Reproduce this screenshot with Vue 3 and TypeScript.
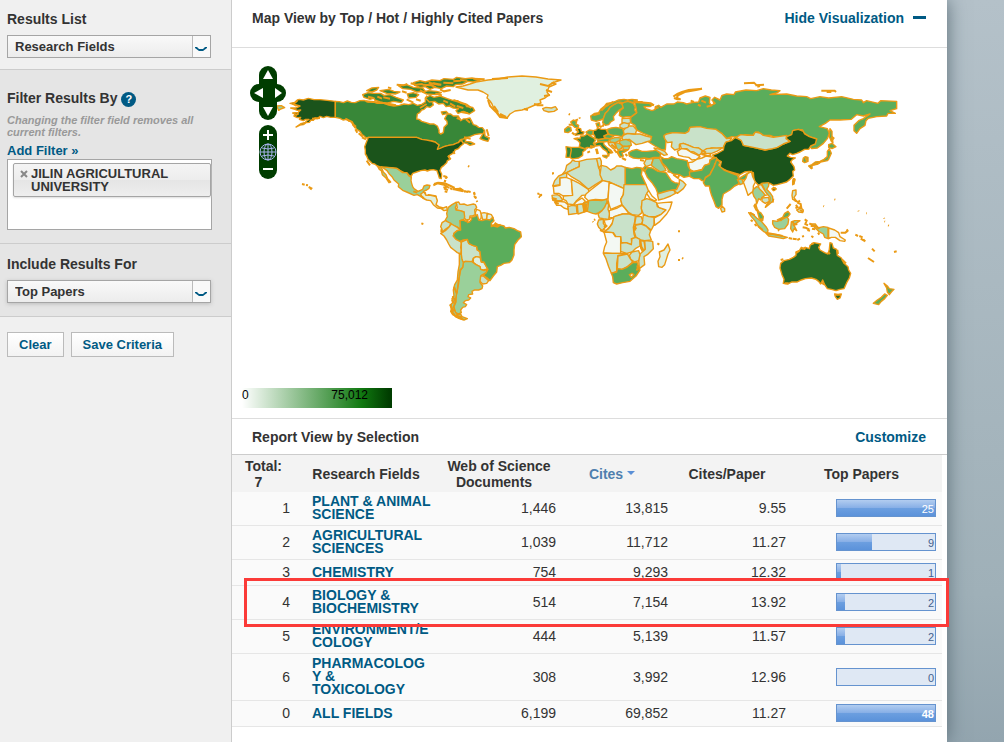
<script setup lang="ts">
import { ref } from 'vue'

type Shape = [fill: string, points: string]
interface Region { id: string; transform: string; shapes: Shape[]; islands: string }

const DARKEST = '#1b541b'
const DARK = '#276927'
const DEEP = '#388738'
const MID = '#5bad5b'
const SOFT = '#9ad09a'
const PALE = '#c9e2c9'
const FAINT = '#e0f0e0'
const NONE = '#f3f8f3'

const regions: Region[] = [
  {
    id: 'north-america',
    transform: 'translate(240 50) scale(0.33333)',
    shapes: [
      [DARKEST, '150,160 165,157 172,150 178,148 190,150 205,145 222,149 240,149 262,151 286,154 286,202 272,202 260,199 250,203 240,199 232,206 225,204 220,211 213,210 208,217 198,218 190,224 180,225 168,231 183,221 196,217 201,212 207,208 197,208 190,212 178,208 182,202 172,203 162,198 166,192 158,189 175,187 182,180 172,181 165,178 152,174 168,174 180,168 166,164'],
      [DEEP, '286,154 298,155 310,158 322,153 334,157 345,158 360,152 372,151 385,156 400,155 412,160 430,159 446,165 462,168 478,166 492,162 506,164 520,160 532,166 545,163 556,156 556,146 560,138 566,148 575,150 580,165 570,172 560,170 552,178 545,180 539,188 532,192 530,207 537,208 545,214 558,218 570,222 582,222 592,228 597,240 597,248 602,252 610,248 612,232 622,222 621,214 614,206 622,192 632,192 640,198 655,198 662,212 670,207 680,206 690,204 694,212 700,224 708,226 716,232 727,233 734,242 730,250 715,252 704,254 690,260 680,262 670,268 660,270 655,278 640,284 626,286 612,290 596,300 590,290 597,285 585,276 574,273 560,272 545,268 530,262 385,262 378,264 372,258 366,254 360,244 350,238 345,230 339,226 335,215 326,213 320,208 309,210 300,205 286,202'],
      [DARKEST, '385,262 530,262 545,268 560,270 574,273 585,276 597,285 592,298 600,295 612,290 626,286 640,284 648,280 655,278 661,272 668,274 670,282 662,288 655,296 645,300 642,308 632,314 625,318 630,328 622,332 620,338 612,346 604,352 600,362 605,372 604,386 598,384 595,374 591,362 580,359 570,360 562,363 555,360 542,362 530,366 518,370 513,380 506,374 500,368 494,369 488,366 480,362 470,355 455,353 440,352 426,352 412,348 404,342 396,340 384,328 380,318 376,312 376,300 374,290 378,280'],
      [SOFT, '424,351 440,352 470,355 480,362 488,368 500,368 507,378 514,382 513,392 515,400 518,410 522,416 534,424 541,421 548,418 552,408 561,405 570,406 567,415 560,420 550,424 553,430 546,432 543,440 532,434 522,436 500,426 488,421 475,410 476,402 462,390 456,380 448,372 441,362 430,354'],
      [SOFT, '412,348 418,358 424,362 427,374 438,384 447,398 452,396 443,386 438,374 430,366 426,356'],
      [FAINT, '543,440 556,428 558,440 566,434 588,438 590,450 576,446 560,448'],
      [DEEP, '368,134 384,128 400,130 422,130 432,136 450,134 468,142 490,150 484,158 460,154 440,160 420,156 404,150 402,144 390,148 372,142'],
      [DEEP, '380,122 396,114 416,112 410,120 396,126'],
      [DEEP, '556,144 570,136 582,142 600,138 622,146 640,152 652,152 664,160 676,162 680,170 698,172 704,182 688,192 670,184 654,190 648,182 656,176 640,174 628,168 618,170 610,160 596,162 584,154 568,156'],
      [DEEP, '520,98 540,92 556,96 576,90 600,92 612,86 640,88 650,82 676,86 696,84 720,90 700,96 684,94 668,102 646,104 640,110 620,108 604,116 584,112 570,118 556,110 540,112 524,106'],
      [DEEP, '476,108 500,104 520,112 548,114 556,124 530,126 512,118 488,116'],
      [DEEP, '420,122 446,118 462,124 480,126 466,132 440,130'],
      [DEEP, '502,132 520,128 536,134 528,142 506,144'],
      [DEEP, '548,126 566,122 590,124 604,128 590,134 560,132'],
      [DEEP, '604,186 618,184 624,190 608,194'],
      [DEEP, '726,256 734,244 735,258 748,264 744,274 730,270 720,266'],
      [DEEP, '664,268 678,266 676,274 692,276 704,282 690,286 680,280 668,278'],
      [SOFT, '110,168 124,167 134,173 122,177 116,181'],
    ],
    islands: 'M186,402l8,2M198,405l6,1M206,411l8,4l-3,4M470,104l20,2l12,-4M512,100l16,4l20,-2M486,124l14,4M444,112l10,3M540,120l10,6M600,118l12,6l20,-4M528,148l14,4M580,100l24,4M610,98l30,2M640,94l22,-2M548,104l26,2l14,6M660,90l22,2M430,142l20,4M412,140l14,6M500,148l20,10M586,130l20,6M630,160l16,10M650,168l20,6M610,152l14,6M384,140l16,4M346,238l6,10M356,250l12,10M366,262l12,6M338,222l10,8M216,206l24,-2M650,204l12,4M678,208l12,10M672,262l20,4M740,238l6,20M610,378l8,2l4,4M612,392l6,2M582,402l12,-4l20,2l18,8l12,6M612,416l12,4M638,416l14,4l18,4M658,414l12,8M674,424l10,2M684,348l4,2M702,426l2,6M702,438l6,6M380,332l10,14M520,424l12,4M624,318l8,10M640,304l4,8M378,154l60,6l30,6M316,206l20,10l10,18M560,162l-20,12M596,104l-30,-6M640,150l40,14l14,10M664,186l20,4M172,152l-12,10l10,6M176,190l-10,6M700,86l34,2',
  },
  {
    id: 'south-america',
    transform: 'translate(380 170) scale(0.33333)',
    shapes: [
      [PALE, '228,97 236,96 240,103 252,102 262,106 280,102 286,104 290,112 284,120 286,134 278,138 270,138 268,148 258,150 252,142 252,126 240,122 228,120 232,112'],
      [SOFT, '205,112 216,104 228,97 230,104 226,112 228,120 240,122 252,126 254,140 252,148 240,152 242,164 240,178 230,170 222,168 212,160 205,158 196,150 202,140 200,130'],
      [NONE, '290,118 300,122 304,132 303,146 296,150 288,140 286,128'],
      [FAINT, '303,130 312,128 322,130 320,148 308,148'],
      [FAINT, '322,130 334,134 340,144 330,150 320,148'],
      [PALE, '186,158 196,152 212,160 208,170 196,178 190,184 183,185 186,178 182,170'],
      [PALE, '186,188 196,182 208,170 214,162 232,172 240,178 232,182 222,190 220,198 228,206 240,210 244,220 242,232 244,240 242,252 232,248 222,240 212,232 206,222 200,210 192,198 182,190'],
      [PALE, '244,216 262,208 266,220 278,226 290,230 292,240 300,245 302,262 288,260 280,265 276,275 256,274 250,278 244,268 244,244'],
      [FAINT, '280,265 288,260 300,262 304,276 312,278 318,288 322,296 312,300 302,298 300,290 288,284 280,278'],
      [MID, '240,152 250,150 258,154 264,150 262,158 268,156 275,148 272,142 284,140 292,134 296,150 306,152 318,148 330,150 338,142 342,152 334,160 334,170 345,162 356,164 372,168 376,174 388,172 402,176 412,182 422,186 424,200 414,210 404,224 402,240 402,255 396,270 388,278 372,280 362,286 352,290 350,306 340,318 330,332 322,324 310,316 318,308 324,298 318,288 312,276 304,276 302,262 300,245 292,240 290,230 278,226 266,220 262,208 250,210 240,214 228,208 220,198 222,190 232,182 242,180'],
      [SOFT, '250,278 256,274 276,275 288,284 300,290 302,298 312,302 322,298 318,308 304,316 302,330 300,338 308,348 306,356 296,360 284,360 276,364 278,372 266,374 264,380 272,384 266,390 256,392 250,398 260,404 256,410 248,412 242,420 244,428 236,432 226,428 222,410 228,396 228,380 232,360 236,340 238,320 242,300 248,292'],
      [PALE, '302,318 310,318 326,332 320,340 308,342 300,334'],
      [SOFT, '238,250 244,254 246,268 250,278 248,292 240,300 238,320 234,340 232,360 228,380 226,396 220,410 226,426 232,434 230,440 218,434 212,424 216,416 210,406 218,398 216,386 222,378 220,360 224,344 232,330 234,306 238,284'],
      [SOFT, '232,434 242,432 246,440 262,446 252,450 238,446 226,440'],
      [FAINT, '122,72 132,66 138,76 152,76 168,80 172,92 168,104 176,110 190,114 200,110 202,120 192,122 184,116 172,114 160,104 152,92 140,90 128,84'],
    ],
    islands: 'M160,46l12,-6l20,4l16,10M190,52l10,2M210,54l6,4M194,64l8,2M218,58l22,-2l10,8M252,62l4,4M262,64l10,2M282,68l2,8M286,80l2,6M290,92l2,4M196,22l4,4M192,32l6,2M124,160l6,2M212,402l4,24l10,12l18,8M214,412l8,12M218,378l8,16M222,350l8,20M216,390l6,10M228,436l18,6M234,442l16,6M336,166l16,4l10,-6M344,158l10,8M472,70l6,2M478,76l8,-2M476,80l4,2M518,10l2,2M183,178l6,10M122,78l10,6',
  },
  {
    id: 'eurasia',
    transform: 'translate(540 70) scale(0.33333)',
    shapes: [
      [MID, '284,98 296,98 318,98 340,104 330,110 312,110 318,116 336,122 346,118 346,110 356,106 362,112 380,102 402,102 412,96 430,98 440,102 456,98 476,96 480,84 496,78 510,82 508,98 514,106 524,100 516,90 524,82 540,90 546,76 560,72 582,74 586,66 618,60 650,62 670,56 694,60 720,62 712,68 690,74 740,72 770,78 800,80 812,86 840,80 866,84 905,80 940,88 965,90 970,98 980,92 1014,100 1022,92 1070,94 1070,116 1050,122 1066,130 1044,130 1040,138 1010,140 985,145 978,152 975,166 960,176 950,190 942,182 942,166 956,152 970,146 990,132 970,138 950,134 934,148 900,150 870,150 856,160 838,170 862,176 868,190 862,206 850,220 832,234 815,236 810,230 820,222 826,212 830,207 808,200 790,188 788,180 775,178 758,182 758,192 744,200 720,202 700,200 690,196 668,196 655,186 642,190 640,196 615,194 598,202 575,200 560,206 545,190 532,188 528,178 510,180 500,175 484,174 480,170 450,172 446,184 435,190 400,188 380,192 372,200 378,212 376,240 362,238 345,228 326,216 330,205 335,200 310,190 290,180 285,166 272,158 272,142 290,128 288,112'],
      [MID, '152,138 164,130 176,128 182,118 194,108 200,100 214,98 226,94 236,90 252,88 262,90 276,88 292,90 286,98 264,94 250,98 236,96 222,104 210,112 204,122 196,130 190,146 182,150 168,154 154,150'],
      [MID, '196,130 204,122 210,112 222,104 234,98 246,102 250,112 238,120 228,130 220,140 222,150 212,156 206,164 196,166 188,158 190,146'],
      [MID, '246,102 250,98 264,94 280,100 286,112 284,120 290,128 274,140 260,140 248,142 238,136 240,122 250,114'],
      [PALE, '372,196 380,192 400,188 435,190 446,184 450,172 480,170 500,175 528,178 545,190 560,206 575,204 568,214 556,218 550,232 530,236 515,234 490,244 476,234 460,232 446,226 430,220 418,224 418,236 404,240 394,230 396,216 382,218 374,206'],
      [PALE, '420,222 430,220 446,226 460,232 476,234 490,244 484,250 478,256 462,246 450,244 440,236 424,236'],
      [PALE, '484,246 500,236 520,234 548,234 530,244 515,250 500,250 488,250'],
      [NONE, '412,244 424,236 440,238 452,246 470,254 480,260 470,268 456,270 446,262 430,260 416,256'],
      [NONE, '445,278 458,276 470,268 486,264 498,258 522,262 510,270 508,282 494,286 486,298 462,304 448,298'],
      [PALE, '250,196 262,190 280,192 300,192 318,198 334,202 332,212 318,216 306,220 288,224 278,216 268,208 248,210 246,202'],
      [PALE, '250,182 262,168 280,168 290,180 286,192 262,190 250,194'],
      [PALE, '246,146 270,144 272,158 260,162 246,158'],
      [PALE, '240,164 252,158 268,162 264,172 250,176 240,172'],
      [MID, '202,178 214,174 228,172 248,176 252,190 246,200 228,196 212,196 204,190'],
      [DARK, '160,182 168,180 174,174 184,178 198,178 204,190 200,198 192,198 194,206 176,208 166,206 164,198 160,192'],
      [MID, '192,198 204,192 222,198 210,206 198,204'],
      [MID, '172,210 194,206 210,206 206,214 190,216 174,216'],
      [SOFT, '210,208 226,202 244,204 238,212 226,218 210,216'],
      [SOFT, '240,212 258,208 272,214 274,226 262,230 248,228 238,220'],
      [SOFT, '226,218 238,220 248,228 244,236 234,240 228,230'],
      [SOFT, '248,230 270,228 266,238 250,240'],
      [PALE, '204,218 222,218 228,230 220,236 208,226'],
      [MID, '234,242 250,240 264,240 254,246 246,248 250,258 240,262 236,252'],
      [DEEP, '102,206 112,204 120,206 122,198 132,198 142,192 150,198 162,204 166,212 160,220 166,228 154,234 142,232 134,236 118,230 120,218 112,210'],
      [MID, '138,186 148,180 160,182 158,194 150,196 142,192'],
      [DEEP, '92,232 118,232 138,238 128,246 128,256 116,264 104,266 94,266 90,260'],
      [DEEP, '78,230 92,232 94,240 90,262 78,262 80,246'],
      [DARK, '106,192 116,186 108,180 112,174 122,176 124,184 132,186 130,192 118,194 106,196'],
      [MID, '92,156 100,150 110,154 108,162 116,166 114,174 104,172 98,166'],
      [MID, '74,178 84,170 92,172 94,182 84,188 74,186'],
      [DEEP, '164,220 176,216 190,216 192,224 200,232 212,240 218,248 208,250 206,258 200,244 188,236 180,226 168,228'],
      [MID, '188,256 204,256 200,264 190,260'],
      [MID, '168,160 178,158 180,168 172,172'],
      [PALE, '8,116 18,112 34,114 46,110 52,118 42,124 26,126 12,122'],
      [MID, '266,248 276,242 290,238 306,244 320,244 340,242 352,240 362,252 360,262 342,262 328,266 312,264 296,266 280,264 268,258'],
      [PALE, '342,234 360,238 374,244 382,254 372,256 360,248 350,242'],
      [PALE, '318,268 340,266 334,284 318,290 312,280'],
      [SOFT, '340,266 358,264 366,280 376,296 378,302 362,306 344,294 334,286'],
      [DARKEST, '518,255 532,250 550,240 552,228 558,216 574,212 585,203 600,208 606,214 610,226 640,232 675,240 698,236 712,232 730,222 750,214 740,208 740,200 755,194 758,182 775,178 790,184 794,192 808,200 830,207 826,222 812,228 806,238 794,238 780,246 770,250 758,254 750,250 742,258 752,262 766,264 756,270 752,276 762,290 764,300 758,304 760,318 750,328 740,336 726,340 712,344 700,346 690,340 680,342 668,340 656,346 642,332 640,308 628,304 614,306 600,314 580,308 560,302 540,292 544,275 525,265'],
      [PALE, '588,202 602,194 622,196 640,196 646,186 662,190 670,196 700,202 740,196 738,206 750,214 730,222 712,232 698,236 675,240 640,232 610,226 604,212'],
      [PALE, '546,304 560,304 580,310 598,314 596,320 576,318 554,312'],
      [MID, '790,264 796,260 804,262 804,274 794,278 788,274'],
      [MID, '806,288 816,284 826,276 840,274 852,268 862,260 862,244 868,236 874,250 866,268 862,272 842,276 834,282 818,286 812,294'],
      [MID, '866,224 876,220 888,230 876,236 866,232'],
      [MID, '870,176 876,184 876,200 882,204 874,214 868,200'],
    ],
    islands: 'M400,80l12,-8l14,-6l20,-6l40,-4l-18,4l-34,6l-20,10l-4,8l12,4l-10,0l-10,-4M612,40l30,-2l6,6M646,46l26,-2M652,50l8,-2M844,62l40,0l4,4M860,66l14,0M86,132l4,2M118,142l2,4M106,152l8,-4M168,236l4,16M170,236l4,16M142,234l-2,2M150,244l-8,4M246,264l12,6M256,252l6,6M204,238l12,10M222,238l8,10M230,244l10,16M214,224l16,12M300,270l12,2M356,112l-12,4M452,92l10,4M474,104l8,4M500,110l16,-4M484,92l14,6M520,96l6,6M-10,106l20,0M192,160l-4,10M180,172l6,-4M150,228l14,2M86,164l12,0M96,188l8,6M280,92l12,4l16,0M204,104l16,-8M160,136l20,-6M110,176l4,8M484,252l20,6l10,-4M488,242l10,6M760,340l4,-12M698,352l8,4l-4,4l-6,-4M796,262l6,14M820,284l20,-6M758,326l6,4l-4,14M292,96l40,4l10,6M184,122l12,-12l10,-6M818,292l-6,4M876,200l2,20',
  },
  {
    id: 'africa',
    transform: 'translate(540 140) scale(0.33333)',
    shapes: [
      [PALE, '98,60 106,64 118,64 118,80 100,88 80,98 66,104 76,92 80,76 92,68'],
      [PALE, '56,108 80,98 80,112 60,114 60,134 38,138 44,122'],
      [PALE, '118,64 140,58 170,56 174,68 176,80 182,104 188,120 166,134 145,148 118,124 94,110 80,98 100,88 118,80'],
      [PALE, '170,56 180,54 184,64 184,76 176,84'],
      [PALE, '184,76 200,80 212,90 224,84 230,78 244,78 256,82 256,148 240,140 210,128 188,122 180,104'],
      [MID, '256,82 276,86 290,82 304,84 306,92 304,104 318,134 256,134'],
      [MID, '312,90 322,82 336,84 354,94 378,98 386,110 394,122 404,128 418,130 410,148 388,152 372,156 354,162 348,146 336,128 322,112'],
      [PALE, '352,162 372,156 388,152 402,150 406,160 392,168 372,176 356,180'],
      [PALE, '418,118 428,124 438,134 430,146 412,160 402,152 410,148 418,132'],
      [MID, '362,50 372,56 385,56 395,50 410,56 424,58 442,62 444,78 450,88 454,98 450,108 432,112 418,104 400,102 388,94 378,80 366,68'],
      [MID, '448,96 462,94 486,90 494,76 508,72 510,60 528,52 536,62 524,72 522,84 514,94 510,104 496,112 496,124 486,122 478,116 462,116 450,110'],
      [MID, '530,58 540,66 536,76 552,90 576,100 592,106 596,116 606,110 626,98 640,100 632,112 624,126 612,118 598,120 596,132 584,138 570,150 550,162 546,178 546,194 536,205 528,200 522,184 514,164 510,150 508,138 496,138 490,128 496,114 510,104 516,92 524,76'],
      [SOFT, '592,118 606,118 610,130 600,134'],
      [PALE, '546,198 554,206 554,214 546,216 542,206'],
      [NONE, '60,114 78,112 94,118 98,166 82,168 70,168 56,160 42,160 40,140 60,136'],
      [FAINT, '94,118 118,130 145,148 148,160 138,165 126,166 116,176 108,184 100,194 84,192 78,182 70,178 70,168 98,166'],
      [NONE, '188,122 208,126 206,150 204,176 190,180 166,178 145,182 134,172 138,162 152,150'],
      [NONE, '208,126 230,136 252,146 250,164 242,178 246,194 232,200 212,208 208,196 204,180 206,150'],
      [PALE, '252,134 318,134 326,154 318,164 312,184 304,200 306,218 296,226 276,224 264,216 254,204 246,194 242,178 250,164'],
      [NONE, '320,160 326,152 336,168 350,180 342,182 330,176'],
      [PALE, '36,166 52,164 60,168 68,180 50,184 38,180'],
      [NONE, '44,186 56,184 74,186 84,194 84,208 72,204 62,196 50,196'],
      [NONE, '100,196 110,184 126,174 136,184 128,192 112,194'],
      [PALE, '84,200 96,196 110,198 112,220 98,222 86,224'],
      [PALE, '112,194 128,192 132,216 114,222'],
      [SOFT, '130,192 142,184 140,214 132,216'],
      [SOFT, '146,182 166,180 184,182 200,178 202,186 194,202 186,212 176,218 168,222 158,220 142,214 144,200'],
      [PALE, '202,184 206,196 204,208 210,220 206,238 190,236 178,234 174,222 186,212 194,202'],
      [NONE, '208,212 232,204 246,196 254,204 268,222 248,222 230,228 220,232 208,234'],
      [PALE, '176,240 190,238 190,250 198,262 186,272 176,262 172,252'],
      [NONE, '192,240 208,238 222,232 218,248 208,262 198,272 190,268 198,260'],
      [PALE, '222,230 248,222 268,222 286,228 284,246 280,262 282,282 286,294 274,296 276,314 258,308 244,308 242,290 228,290 220,278 192,276 206,266 216,252'],
      [NONE, '192,276 218,278 226,290 242,290 242,308 242,340 218,340 190,338 194,320 200,306'],
      [PALE, '306,182 320,176 334,180 350,188 352,200 378,210 362,224 346,230 324,230 310,222 304,206'],
      [NONE, '350,190 370,188 396,186 390,206 380,222 360,244 344,256 342,234 362,224 378,210 356,202'],
      [PALE, '310,224 326,230 342,232 342,254 334,270 318,258 306,252'],
      [PALE, '288,230 304,230 308,242 304,252 284,254'],
      [PALE, '286,256 304,252 318,258 332,272 328,284 334,300 314,302 302,300 288,292 282,272'],
      [PALE, '242,310 258,308 274,314 276,296 288,292 300,298 300,318 286,326 276,336 260,340 242,334'],
      [PALE, '302,302 312,304 316,326 308,336 302,324'],
      [PALE, '314,302 338,304 340,326 322,344 312,350 314,374 298,386 296,360 300,342 316,328'],
      [PALE, '268,346 276,336 296,332 300,344 296,362 284,366 272,358'],
      [PALE, '190,340 218,340 254,340 264,342 234,346 230,370 230,394 214,400 206,380 198,356'],
      [PALE, '234,348 262,342 272,358 278,366 262,380 246,388 232,386'],
      [MID, '214,400 230,396 232,386 246,388 260,382 278,368 292,368 296,382 300,390 288,408 270,424 248,428 230,432 220,428 218,410'],
      [NONE, '268,404 276,400 282,404 274,412'],
      [FAINT, '384,312 390,330 384,342 374,374 366,382 356,380 354,364 360,350 358,336 372,330'],
      [MID, '310,84 316,78 322,82 314,94'],
    ],
    islands: 'M36,100l6,0M0,164l6,2M0,168l2,2M158,244l2,2M162,240l4,-2M352,310l6,4M414,274l6,0M414,360l6,0M426,354l4,2M36,174l14,4M38,180l20,4M44,186l12,6M306,84l6,10M282,264l4,8M284,256l4,12M288,388l6,2M292,376l2,14M300,300l4,20l6,10M382,94l8,2M400,104l14,10l4,-10M134,186l-2,30M138,192l-2,22M192,262l10,-6M110,200l2,18M180,270l14,6',
  },
  {
    id: 'oceania',
    transform: 'translate(690 160) scale(0.33333)',
    shapes: [
      [NONE, '160,66 168,54 172,42 184,34 188,50 196,66 190,78 190,92 184,98 174,106 168,88'],
      [SOFT, '190,88 200,80 212,84 222,96 228,104 216,112 212,120 206,116 200,132 198,118 192,110 188,98'],
      [FAINT, '204,76 214,74 222,88 234,104 226,106 218,96 208,86'],
      [SOFT, '214,70 236,68 236,78 230,88 240,98 248,110 248,124 236,134 226,142 230,134 240,124 240,112 226,94 222,84'],
      [PALE, '216,114 236,112 238,124 226,130 216,124'],
      [SOFT, '196,132 200,144 206,154 198,150 192,138'],
      [MID, '202,154 212,158 220,170 218,182 208,176'],
      [SOFT, '176,158 188,162 200,174 214,184 228,200 234,210 232,220 220,214 206,200 196,184 184,170'],
      [SOFT, '228,220 244,222 262,224 276,228 292,232 280,236 260,232 236,228'],
      [SOFT, '248,182 262,184 276,178 290,170 296,178 294,192 284,206 266,208 254,202 248,192'],
      [MID, '262,180 278,172 284,160 294,154 300,162 294,170 282,174 272,182'],
      [SOFT, '304,186 314,182 330,182 318,190 312,196 320,212 312,206 308,216 302,206'],
      [SOFT, '362,192 376,192 384,204 400,200 414,202 414,236 404,232 400,222 386,214 376,204'],
      [NONE, '416,204 434,210 446,218 450,230 466,240 464,244 450,242 436,232 424,232 416,236'],
      [PALE, '308,92 318,90 318,104 312,112 318,122 308,118 306,106'],
      [PALE, '320,150 332,144 340,150 338,158 326,156'],
      [DARK, '272,310 282,302 298,298 310,292 318,286 318,276 328,272 334,262 344,268 346,262 358,266 360,256 372,248 392,252 386,262 390,270 404,278 414,282 418,268 420,248 426,250 430,264 440,268 442,286 454,294 462,310 474,320 476,330 482,340 478,354 470,368 462,386 450,388 438,392 424,388 412,386 404,374 398,360 392,372 386,364 378,358 364,354 346,356 334,360 322,366 306,366 294,372 280,370 282,358 276,344 270,324'],
      [DARK, '434,402 444,404 454,402 450,414 442,418 436,410'],
      [MID, '582,370 592,378 598,386 612,388 604,396 598,404 592,396 590,384'],
      [MID, '584,402 592,406 584,416 574,424 566,434 550,430 562,420 574,412'],
      [DARKEST, '246,86 256,84 258,88 250,92'],
      [MID, '308,62 314,56 312,70 308,74'],
    ],
    islands: 'M182,180l6,4M194,192l6,6M180,158l14,8M204,198l14,12M290,146l12,-14M314,122l10,4l6,-4M322,128l10,4l2,12l-8,-2M318,134l6,10M312,118l8,6M316,142l6,2M308,196l8,-4M306,184l8,10l8,-2M344,178l6,4l-4,10l8,4M338,202l12,2M348,204l10,4M358,190l10,6M362,198l16,0l10,8M366,206l10,2M296,234l10,2M308,236l12,2M322,240l8,-4M336,230l6,-2M352,210l8,2M364,228l6,4M264,210l4,2M452,218l14,0l8,-6M470,208l4,6M496,224l8,4M508,228l10,4M512,236l14,8M520,238l6,6M546,266l8,8M534,294l18,12M612,276l8,-2M384,218l4,6M394,368l10,6M342,262l4,4M364,252l8,-2M414,276l6,6M334,266l12,-2M272,300l8,-2M434,404l18,0M442,270l2,12M456,298l12,12M284,370l12,0M318,280l10,-8M330,150l10,6M250,116l-2,12M196,134l4,10M212,176l4,6M228,218l50,10M505,152l1,2M529,160l2,0M433,118l3,1M400,138l2,1M582,174l1,2M583,184l2,1M594,196l3,1',
  },
]

const greenland =
  '456,87 463,86 470,84 476,82 488,80 498,79 508,77 522,76 536,77 548,79 561,80 552,83 556,84 549,87 547,92 549,95 545,98 540,100 541,103 535,105 528,108 522,110 515,111 510,114 507,118 503,117 499,115 497,111 494,109 492,104 490,101 487,98 488,95 483,92 478,90 468,90'

interface Row { rank: number; field: string[]; docs: string; cites: string; ratio: string; top: number; share: number; marked?: boolean }
const rows: Row[] = [
  { rank: 1, field: ['PLANT & ANIMAL', 'SCIENCE'], docs: '1,446', cites: '13,815', ratio: '9.55', top: 25, share: 100 },
  { rank: 2, field: ['AGRICULTURAL', 'SCIENCES'], docs: '1,039', cites: '11,712', ratio: '11.27', top: 9, share: 36 },
  { rank: 3, field: ['CHEMISTRY'], docs: '754', cites: '9,293', ratio: '12.32', top: 1, share: 4 },
  { rank: 4, field: ['BIOLOGY &', 'BIOCHEMISTRY'], docs: '514', cites: '7,154', ratio: '13.92', top: 2, share: 8, marked: true },
  { rank: 5, field: ['ENVIRONMENT/E', 'COLOGY'], docs: '444', cites: '5,139', ratio: '11.57', top: 2, share: 8 },
  { rank: 6, field: ['PHARMACOLOG', 'Y &', 'TOXICOLOGY'], docs: '308', cites: '3,992', ratio: '12.96', top: 0, share: 0 },
  { rank: 0, field: ['ALL FIELDS'], docs: '6,199', cites: '69,852', ratio: '11.27', top: 48, share: 100 },
]

const listType = ref('Research Fields')
const paperType = ref('Top Papers')
const filters = ref(['JILIN AGRICULTURAL UNIVERSITY'])
</script>

<template>
  <div class="page">
    <aside class="sidebar">
      <section class="block">
        <label class="title" for="list-type">Results List</label>
        <div class="picker">
          <select id="list-type" v-model="listType">
            <option>Research Fields</option>
            <option>Institutions</option>
          </select>
          <svg class="chevron" viewBox="0 0 12 6" aria-hidden="true"><path d="M0 1 H2 L4 3 H8 L10 1 H12 V2 L8 5 H4 L0 2 Z" /></svg>
        </div>
      </section>

      <section class="block shaded filter">
        <h2 class="title with-help">Filter Results By <button class="help" type="button" aria-label="Help">?</button></h2>
        <p class="note">Changing the filter field removes all current filters.</p>
        <a class="add" href="#">Add Filter »</a>
        <div class="chosen">
          <div v-for="(name, i) in filters" :key="name" class="tag">
            <button type="button" :aria-label="'Remove ' + name" @click="filters.splice(i, 1)">
              <svg viewBox="0 0 8 8" aria-hidden="true"><path d="M1 1 L7 7 M7 1 L1 7" /></svg>
            </button>
            <span>{{ name }}</span>
          </div>
        </div>
      </section>

      <section class="block shaded include">
        <label class="title" for="paper-type">Include Results For</label>
        <div class="picker raised">
          <select id="paper-type" v-model="paperType">
            <option>Top Papers</option>
            <option>Hot Papers</option>
            <option>Highly Cited Papers</option>
          </select>
          <svg class="chevron" viewBox="0 0 12 6" aria-hidden="true"><path d="M0 1 H2 L4 3 H8 L10 1 H12 V2 L8 5 H4 L0 2 Z" /></svg>
        </div>
      </section>

      <div class="actions">
        <button type="button">Clear</button>
        <button type="button">Save Criteria</button>
      </div>
    </aside>

    <main class="content">
      <header class="bar map-bar">
        <h2 class="title">Map View by Top / Hot / Highly Cited Papers</h2>
        <a href="#">Hide Visualization<i class="minus"></i></a>
      </header>

      <div class="map">
        <svg class="world" viewBox="232 48 715 370" role="img" aria-label="World map">
          <polygon :fill="FAINT" :points="greenland" />
          <path class="isle" d="M488,100l2,6l6,6l4,5l8,1M494,106l4,6M540,84l8,2l6,-4M546,90l6,2M544,96l6,-1M534,104l5,1M524,109l4,1M500,114l6,3M492,79l16,-1" />
          <g v-for="r in regions" :key="r.id" :transform="r.transform">
            <polygon v-for="(s, i) in r.shapes" :key="i" :fill="s[0]" :points="s[1]" />
            <path class="isle" :d="r.islands" />
          </g>
        </svg>

        <div class="controls">
          <div class="pan">
            <button class="up" type="button" aria-label="Pan up"><svg viewBox="0 0 18 18"><path d="M9 4 L14 13 H4 Z" /></svg></button>
            <div class="sides">
              <button class="left" type="button" aria-label="Pan left"><svg viewBox="0 0 18 18"><path d="M4 9 L13 4 V14 Z" /></svg></button>
              <button class="right" type="button" aria-label="Pan right"><svg viewBox="0 0 18 18"><path d="M14 9 L7 4 V14 Z" /></svg></button>
            </div>
            <button class="down" type="button" aria-label="Pan down"><svg viewBox="0 0 18 18"><path d="M9 14 L14 5 H4 Z" /></svg></button>
          </div>
          <div class="zoom">
            <button class="up" type="button" aria-label="Zoom in"><svg viewBox="0 0 18 18"><path d="M4 9 H14 V11 H4 Z M8 5 H10 V15 H8 Z" /></svg></button>
            <button type="button" aria-label="Zoom to world">
              <svg class="globe" viewBox="0 0 18 18">
                <circle cx="9" cy="9" r="8" /><ellipse cx="9" cy="9" rx="4" ry="8" />
                <path d="M9 1 V17 M1 9 H17 M3 5 Q9 7 15 5 M3 13 Q9 11 15 13" />
              </svg>
            </button>
            <button class="down" type="button" aria-label="Zoom out"><svg viewBox="0 0 18 18"><path d="M4 7 H14 V9 H4 Z" /></svg></button>
          </div>
        </div>

        <div class="legend"><span>0</span><span>75,012</span></div>
      </div>

      <header class="bar report-bar">
        <h2 class="title">Report View by Selection</h2>
        <a href="#">Customize</a>
      </header>

      <table>
        <colgroup>
          <col class="c-rank" /><col class="c-field" /><col class="c-docs" /><col class="c-cites" /><col class="c-ratio" /><col class="c-top" />
        </colgroup>
        <thead>
          <tr>
            <th class="total">Total:<br />7<i class="gap"></i></th>
            <th>Research Fields</th>
            <th>Web of Science<br />Documents<i class="gap"></i></th>
            <th class="sorted">Cites<i class="caret"></i></th>
            <th>Cites/Paper</th>
            <th>Top Papers<i class="gap narrow"></i></th>
          </tr>
        </thead>
        <tbody>
          <tr v-for="row in rows" :key="row.rank">
            <td>{{ row.rank }}</td>
            <td class="field">
              <a href="#"><template v-for="(line, i) in row.field" :key="line"><br v-if="i" />{{ line }}</template></a>
            </td>
            <td>{{ row.docs }}</td>
            <td>{{ row.cites }}</td>
            <td>{{ row.ratio }}</td>
            <td class="top">
              <div class="meter" :class="{ full: row.share === 100, strong: row.rank === 0 }">
                <div class="fill" :style="{ width: row.share + '%' }"></div>
                <span>{{ row.top }}</span>
              </div>
              <div v-if="row.marked" class="mark"></div>
            </td>
          </tr>
        </tbody>
      </table>
    </main>
  </div>
</template>

<style>
body {
  margin: 0;
  background: #a3b1ba;
}
</style>

<style scoped>
.page {
  display: flex;
  min-height: 100vh;
  box-sizing: border-box;
  padding-right: 57px;
  overflow: hidden;
  background: linear-gradient(#b4c1c9, #9fb0b8 80%, #93a5af);
  font: 14px/16px "Liberation Sans", Arial, sans-serif;
  color: #333;
}
h2, p { margin: 0; }
a { color: #005a84; font-weight: bold; text-decoration: none; }
button { font: inherit; padding: 0; border: 0; cursor: pointer; }
.title { display: block; font-size: 14px; font-weight: bold; }
.with-help { display: flex; gap: 4px; height: 16px; }

.sidebar {
  position: relative;
  z-index: 1;
  flex: none;
  width: 231px;
  background: #f0f0f0;
  border-right: 1px solid #ccc;
}
.block { padding: 11px 20px 11px 7px; border-bottom: 1px solid #ccc; }
.shaded { background: #e5e5e5; }
.filter { padding: 20px 19px 13px 7px; }
.include { padding: 12px 20px 13px 7px; }
.picker { position: relative; margin-top: 8px; border: 1px solid #a5a5a5; }
.picker.raised { box-shadow: 0 1px 4px #bbb; }
.picker select {
  display: block;
  appearance: none;
  width: 100%;
  height: 21px;
  padding: 0 24px 0 7px;
  border: 0;
  border-radius: 0;
  background: linear-gradient(90deg, transparent calc(100% - 18px), #bbb calc(100% - 18px), #bbb calc(100% - 17px), #f9f9f9 calc(100% - 17px)), linear-gradient(#f9f9f9, #ececec);
  font: bold 13px/21px "Liberation Sans", Arial, sans-serif;
  color: #333;
}
.chevron { position: absolute; right: 3px; top: 10px; width: 12px; height: 6px; pointer-events: none; }
.chevron path { fill: #005a84; }

.help {
  width: 15px;
  height: 15px;
  margin-top: 2px;
  border-radius: 50%;
  background: #005a84;
  color: #fff;
  font-size: 11px;
  font-weight: bold;
  line-height: 15px;
}
.note { margin-top: 8px; font: italic bold 11px/12px "Liberation Sans", Arial, sans-serif; color: #999; }
.add { display: block; margin-top: 5px; font-size: 13px; }
.chosen {
  min-height: 66px;
  padding: 3px 0 0 5px;
  background: #fff;
  border: 1px solid #a5a5a5;
}
.tag {
  display: flex;
  align-items: flex-start;
  gap: 3px;
  padding: 3px 20px 3px 6px;
  border: 1px solid #a5a5a5;
  border-radius: 2px;
  background: linear-gradient(#f4f4f4, #ededed 50%, #e5e5e5 50%, #eee);
  box-shadow: 0 1px 2px #ddd;
  font: bold 13px/13px "Liberation Sans", Arial, sans-serif;
}
.tag button { flex: none; width: 8px; height: 8px; margin-top: 3px; background: none; }
.tag svg { display: block; width: 8px; height: 8px; }
.tag path { stroke: #888; stroke-width: 2; }

.actions { display: flex; gap: 7px; padding: 15px 7px; }
.actions button {
  height: 25px;
  padding: 0 11px;
  border: 1px solid #bbb;
  background: linear-gradient(#fff, #f3f3f3);
  color: #005a84;
  font: bold 13px/15px "Liberation Sans", Arial, sans-serif;
}

.content {
  flex: 1;
  min-width: 0;
  background: #fff;
  box-shadow: 0 0 18px #5b6d77;
}
.bar {
  display: flex;
  justify-content: space-between;
  align-items: center;
  padding: 0 21px 0 20px;
  border-bottom: 1px solid #ccc;
}
.map-bar { height: 36px; padding-bottom: 11px; border-color: #ddd; }
.report-bar { height: 35px; }
.minus { display: inline-block; width: 13px; height: 3px; margin-left: 9px; background: #005a84; vertical-align: 4px; }

.map { position: relative; border-bottom: 1px solid #ddd; }
.world { display: block; width: 100%; }
.world polygon { stroke: #eb9a14; stroke-width: 1.4; stroke-linejoin: round; vector-effect: non-scaling-stroke; }
.isle { fill: none; stroke: #eb9a14; stroke-width: 2; vector-effect: non-scaling-stroke; }

.controls { position: absolute; left: 18px; top: 18px; }
.controls button { display: block; width: 18px; height: 18px; background: #003d00; }
.controls svg { display: block; width: 18px; height: 18px; fill: #fff; }
.controls .globe { fill: none; stroke: #aab4f0; }
.pan { display: flex; flex-direction: column; align-items: center; }
.sides { display: flex; }
.controls .up { border-radius: 9px 9px 0 0; }
.controls .down { border-radius: 0 0 9px 9px; }
.controls .left { border-radius: 9px 0 0 9px; }
.controls .right { border-radius: 0 9px 9px 0; }
.zoom { margin: 5px 9px 0; }

.legend {
  position: absolute;
  left: 10px;
  bottom: 10px;
  display: flex;
  justify-content: space-between;
  box-sizing: border-box;
  width: 150px;
  height: 20px;
  padding-right: 24px;
  background: linear-gradient(90deg, #fff, #107810 80%, #003d00 98%);
  color: #000;
  font-size: 12px;
  line-height: 14px;
}

table {
  width: calc(100% - 5px);
  table-layout: fixed;
  border-collapse: collapse;
}
.c-rank { width: 58px; }
.c-field { width: 152px; }
.c-docs { width: 114px; }
.c-cites { width: 112px; }
.c-ratio { width: 118px; }
.c-top { width: 156px; }
thead tr { background: #f3f3f3; }
th { padding: 3px 0 2px; font-weight: bold; }
.total { padding-left: 5px; }
.gap { display: inline-block; width: 10px; }
.narrow { width: 5px; }
.sorted { color: #4f7fae; }
.caret {
  display: inline-block;
  margin-left: 4px;
  border: 4px solid transparent;
  border-top-color: #5a8fd6;
  border-bottom: 0;
  vertical-align: 4px;
}
tbody tr { position: relative; background: #fafafa; border-bottom: 1px solid #e6e6e6; }
td { padding: 3px 0 4px; text-align: right; }
.field { padding-left: 22px; text-align: left; line-height: 13px; }
.top { padding: 3px 6px 4px 50px; }
.meter {
  position: relative;
  height: 16px;
  border: 1px solid #6593cf;
  background: #dfe8f4;
}
.fill { height: 100%; background: linear-gradient(#b2cdf0, #86aee6 50%, #6c9fe0 50%, #5b92da); }
.meter span {
  position: absolute;
  right: 1px;
  top: 1px;
  color: #44618f;
  font-size: 11px;
}
.full span { color: #fff; }
.strong span { font-weight: bold; }
.mark {
  position: absolute;
  left: 12px;
  right: -7px;
  top: -8px;
  bottom: -8px;
  border: 3px solid #fb3a38;
  pointer-events: none;
  z-index: 1;
}
</style>
